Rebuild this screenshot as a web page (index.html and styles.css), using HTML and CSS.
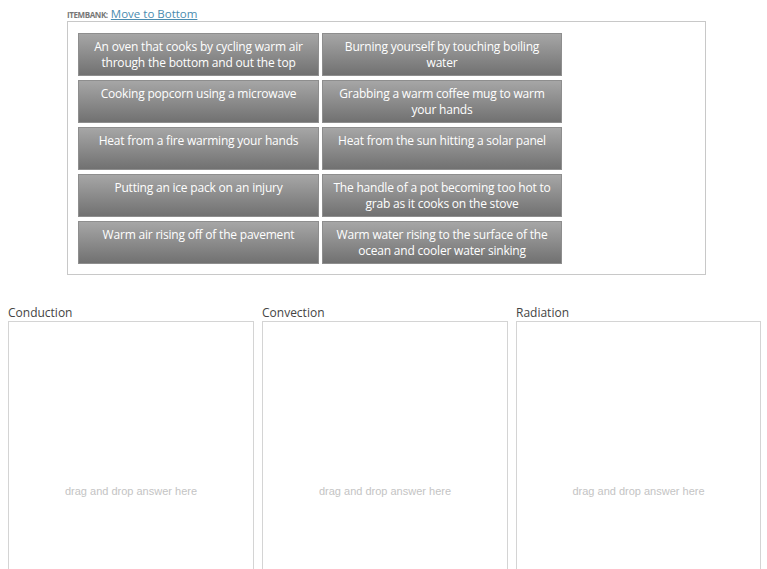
FILE: index.html
```
<!DOCTYPE html>
<html>
<head>
<meta charset="utf-8">
<link rel="stylesheet" href="styles.css">
</head>
<body>
<div class="bank-wrap">
  <div class="bank-head"><span class="bank-label">ITEMBANK:</span> <a class="bank-link" href="#">Move to Bottom</a></div>
  <div class="bank">
    <div class="grid">
      <div class="item">An oven that cooks by cycling warm air through the bottom and out the top</div>
      <div class="item">Burning yourself by touching boiling water</div>
      <div class="item">Cooking popcorn using a microwave</div>
      <div class="item">Grabbing a warm coffee mug to warm your hands</div>
      <div class="item">Heat from a fire warming your hands</div>
      <div class="item">Heat from the sun hitting a solar panel</div>
      <div class="item">Putting an ice pack on an injury</div>
      <div class="item">The handle of a pot becoming too hot to grab as it cooks on the stove</div>
      <div class="item">Warm air rising off of the pavement</div>
      <div class="item">Warm water rising to the surface of the ocean and cooler water sinking</div>
    </div>
  </div>
</div>
<div class="buckets">
  <div class="bucket">
    <div class="bucket-title">Conduction</div>
    <div class="drop"><span class="hint">drag and drop answer here</span></div>
  </div>
  <div class="bucket">
    <div class="bucket-title">Convection</div>
    <div class="drop"><span class="hint">drag and drop answer here</span></div>
  </div>
  <div class="bucket">
    <div class="bucket-title">Radiation</div>
    <div class="drop"><span class="hint">drag and drop answer here</span></div>
  </div>
</div>
</body>
</html>
```
FILE: styles.css
```
html, body {
  margin: 0;
  padding: 0;
  background: #fff;
}
body {
  font-family: "Open Sans", "Noto Sans", sans-serif;
  color: #333;
  overflow: hidden;
}
.bank-wrap {
  margin-left: 67px;
  width: 639px;
  padding-top: 6px;
}
.bank-head {
  height: 15px;
  line-height: 15px;
  font-size: 12px;
}
.bank-label {
  font-size: 8px;
  font-weight: bold;
  color: #777;
  letter-spacing: -0.4px;
}
.bank-link {
  color: #4a8cb0;
  text-decoration: underline;
  font-size: 11.5px;
}
.bank {
  border: 1px solid #c8c8c8;
  padding: 11px 10px 11px 10px;
  height: 230px;
}
.grid {
  display: grid;
  grid-template-columns: 241px 240px;
  grid-auto-rows: 43px;
  column-gap: 3px;
  row-gap: 4px;
}
.item {
  box-sizing: border-box;
  border: 1px solid #8e8e8e;
  background: linear-gradient(#a6a6a6, #717171);
  color: #fff;
  font-size: 12px;
  line-height: 16px;
  text-align: center;
  padding: 5px 8px 0;
  letter-spacing: -0.2px;
}
.buckets {
  display: flex;
  gap: 8px;
  margin: 29px 0 0 8px;
}
.bucket {
  width: 246px;
}
.bucket:last-child {
  width: 245px;
}
.bucket-title {
  font-size: 12px;
  line-height: 16px;
  color: #444;
  height: 16px;
  padding-top: 1px;
}
.drop {
  box-sizing: border-box;
  border: 1px solid #d4d4d4;
  height: 260px;
  display: flex;
  justify-content: center;
  padding-top: 162px;
}
.hint {
  font-family: "Liberation Sans", Arial, sans-serif;
  font-size: 11px;
  color: #c4c4c4;
  line-height: 14px;
}
```
